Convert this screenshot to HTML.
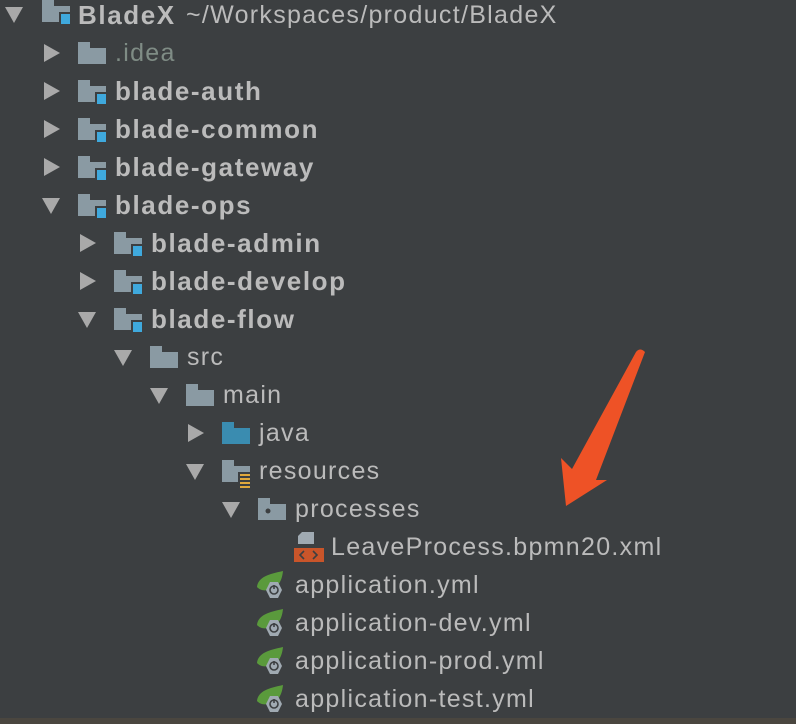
<!DOCTYPE html>
<html><head><meta charset="utf-8"><style>
body{margin:0;width:796px;height:724px;background:#3c3f41;overflow:hidden;position:relative;font-family:"Lucida Grande","Liberation Sans",sans-serif;color:#bbbbbb}
.r{position:absolute;height:38px;line-height:38px;white-space:nowrap}
.t{position:absolute;top:0;font-size:25px;letter-spacing:1.3px}
.b{font-weight:bold;font-size:26px;letter-spacing:1.6px}
.ic{position:absolute;top:8px}
.ar{position:absolute;top:11px}
</style></head><body>
<svg width="0" height="0" style="position:absolute">
<defs>
<symbol id="fold" viewBox="0 0 28 22"><path d="M0 0H12V6H28V22H0Z" fill="#8a9aa3"/></symbol>
<symbol id="mod" viewBox="0 0 28 24"><path d="M0 0H12V6H28V22H0Z" fill="#8a9aa3"/><rect x="17" y="12" width="12" height="12" fill="#3c3f41"/><rect x="19" y="14" width="10" height="10" fill="#3fa9dd"/></symbol>
<symbol id="down" viewBox="0 0 18 16"><path d="M0 0H18L9 16Z" fill="#a9a9a9"/></symbol>
<symbol id="right" viewBox="0 0 16 18"><path d="M0 0L16 9L0 18Z" fill="#a9a9a9"/></symbol>
<symbol id="spring" viewBox="0 0 30 28"><path d="M0 16C1 6 12 3 26 0C25 9 22 16 14 18C8 20 4 20 0 16Z" fill="#5a9a3c"/><path d="M13 11L21 11L25 19L21 27L13 27L9 19Z" fill="#a0aab2"/><circle cx="17" cy="19" r="4" fill="none" stroke="#3c3f41" stroke-width="1.6"/><path d="M17 14V18" stroke="#3c3f41" stroke-width="1.6"/></symbol>
</defs></svg>

<div class="r" style="top:-4px;left:0;width:796px">
<svg class="ar" style="left:5px;top:11px" width="18" height="16"><use href="#down"/></svg>
<svg class="ic" style="left:42px;top:4px" width="28" height="24"><use href="#mod"/></svg>
<span class="t b" style="left:78px">BladeX</span><span class="t" style="left:186px">~/Workspaces/product/BladeX</span></div>

<div class="r" style="top:34px;left:0"><svg class="ar" style="left:44px;top:10px" width="16" height="18"><use href="#right"/></svg><svg class="ic" style="left:78px" width="28" height="22"><use href="#fold"/></svg><span class="t" style="left:115px;color:#7f8c85">.idea</span></div>
<div class="r" style="top:72px;left:0"><svg class="ar" style="left:44px;top:10px" width="16" height="18"><use href="#right"/></svg><svg class="ic" style="left:78px" width="28" height="24"><use href="#mod"/></svg><span class="t b" style="left:115px">blade-auth</span></div>
<div class="r" style="top:110px;left:0"><svg class="ar" style="left:44px;top:10px" width="16" height="18"><use href="#right"/></svg><svg class="ic" style="left:78px" width="28" height="24"><use href="#mod"/></svg><span class="t b" style="left:115px">blade-common</span></div>
<div class="r" style="top:148px;left:0"><svg class="ar" style="left:44px;top:10px" width="16" height="18"><use href="#right"/></svg><svg class="ic" style="left:78px" width="28" height="24"><use href="#mod"/></svg><span class="t b" style="left:115px">blade-gateway</span></div>
<div class="r" style="top:186px;left:0"><svg class="ar" style="left:42px;top:12px" width="18" height="16"><use href="#down"/></svg><svg class="ic" style="left:78px" width="28" height="24"><use href="#mod"/></svg><span class="t b" style="left:115px">blade-ops</span></div>
<div class="r" style="top:224px;left:0"><svg class="ar" style="left:80px;top:10px" width="16" height="18"><use href="#right"/></svg><svg class="ic" style="left:114px" width="28" height="24"><use href="#mod"/></svg><span class="t b" style="left:151px">blade-admin</span></div>
<div class="r" style="top:262px;left:0"><svg class="ar" style="left:80px;top:10px" width="16" height="18"><use href="#right"/></svg><svg class="ic" style="left:114px" width="28" height="24"><use href="#mod"/></svg><span class="t b" style="left:151px">blade-develop</span></div>
<div class="r" style="top:300px;left:0"><svg class="ar" style="left:78px;top:12px" width="18" height="16"><use href="#down"/></svg><svg class="ic" style="left:114px" width="28" height="24"><use href="#mod"/></svg><span class="t b" style="left:151px">blade-flow</span></div>
<div class="r" style="top:338px;left:0"><svg class="ar" style="left:114px;top:12px" width="18" height="16"><use href="#down"/></svg><svg class="ic" style="left:150px" width="28" height="22"><use href="#fold"/></svg><span class="t" style="left:187px">src</span></div>
<div class="r" style="top:376px;left:0"><svg class="ar" style="left:150px;top:12px" width="18" height="16"><use href="#down"/></svg><svg class="ic" style="left:186px" width="28" height="22"><use href="#fold"/></svg><span class="t" style="left:223px">main</span></div>
<div class="r" style="top:414px;left:0"><svg class="ar" style="left:188px;top:10px" width="16" height="18"><use href="#right"/></svg><svg class="ic" style="left:222px" width="28" height="22"><path d="M0 0H12V6H28V22H0Z" fill="#3a8cb0"/></svg><span class="t" style="left:259px">java</span></div>
<div class="r" style="top:452px;left:0"><svg class="ar" style="left:186px;top:12px" width="18" height="16"><use href="#down"/></svg><svg class="ic" style="left:222px" width="28" height="28"><path d="M0 0H12V6H28V22H0Z" fill="#8a9aa3"/><rect x="16" y="12" width="14" height="16" fill="#3c3f41"/><g fill="#e0a83c"><rect x="18" y="14" width="10" height="2"/><rect x="18" y="18" width="10" height="2"/><rect x="18" y="22" width="10" height="2"/><rect x="18" y="26" width="10" height="2"/></g></svg><span class="t" style="left:259px">resources</span></div>
<div class="r" style="top:490px;left:0"><svg class="ar" style="left:222px;top:12px" width="18" height="16"><use href="#down"/></svg><svg class="ic" style="left:258px" width="28" height="22"><path d="M0 0H12V6H28V22H0Z" fill="#8a9aa3"/><circle cx="10" cy="13" r="2.5" fill="#3c3f41"/></svg><span class="t" style="left:295px">processes</span></div>
<div class="r" style="top:528px;left:0"><svg class="ic" style="left:294px;top:4px" width="30" height="30"><path d="M8 0H20V12H4V4Z" fill="#a0aab2"/><rect x="0" y="16" width="30" height="14" fill="#c9552a"/><path d="M10 19L6 23L10 27M19 19L23 23L19 27" stroke="#3c3f41" stroke-width="1.6" fill="none"/></svg><span class="t" style="left:331px">LeaveProcess.bpmn20.xml</span></div>
<div class="r" style="top:566px;left:0"><svg class="ic" style="left:257px;top:5px" width="30" height="28"><use href="#spring"/></svg><span class="t" style="left:295px">application.yml</span></div>
<div class="r" style="top:604px;left:0"><svg class="ic" style="left:257px;top:5px" width="30" height="28"><use href="#spring"/></svg><span class="t" style="left:295px">application-dev.yml</span></div>
<div class="r" style="top:642px;left:0"><svg class="ic" style="left:257px;top:5px" width="30" height="28"><use href="#spring"/></svg><span class="t" style="left:295px">application-prod.yml</span></div>
<div class="r" style="top:680px;left:0"><svg class="ic" style="left:257px;top:5px" width="30" height="28"><use href="#spring"/></svg><span class="t" style="left:295px">application-test.yml</span></div>

<div style="position:absolute;left:0;top:718px;width:796px;height:6px;background:#4a463f"></div>

<svg style="position:absolute;left:0;top:0" width="796" height="724">
<path d="M636 352Q640 347 645 352L596 480L607 480L566 506L561 458L572 469Z" fill="#ee5226"/>
</svg>
</body></html>
